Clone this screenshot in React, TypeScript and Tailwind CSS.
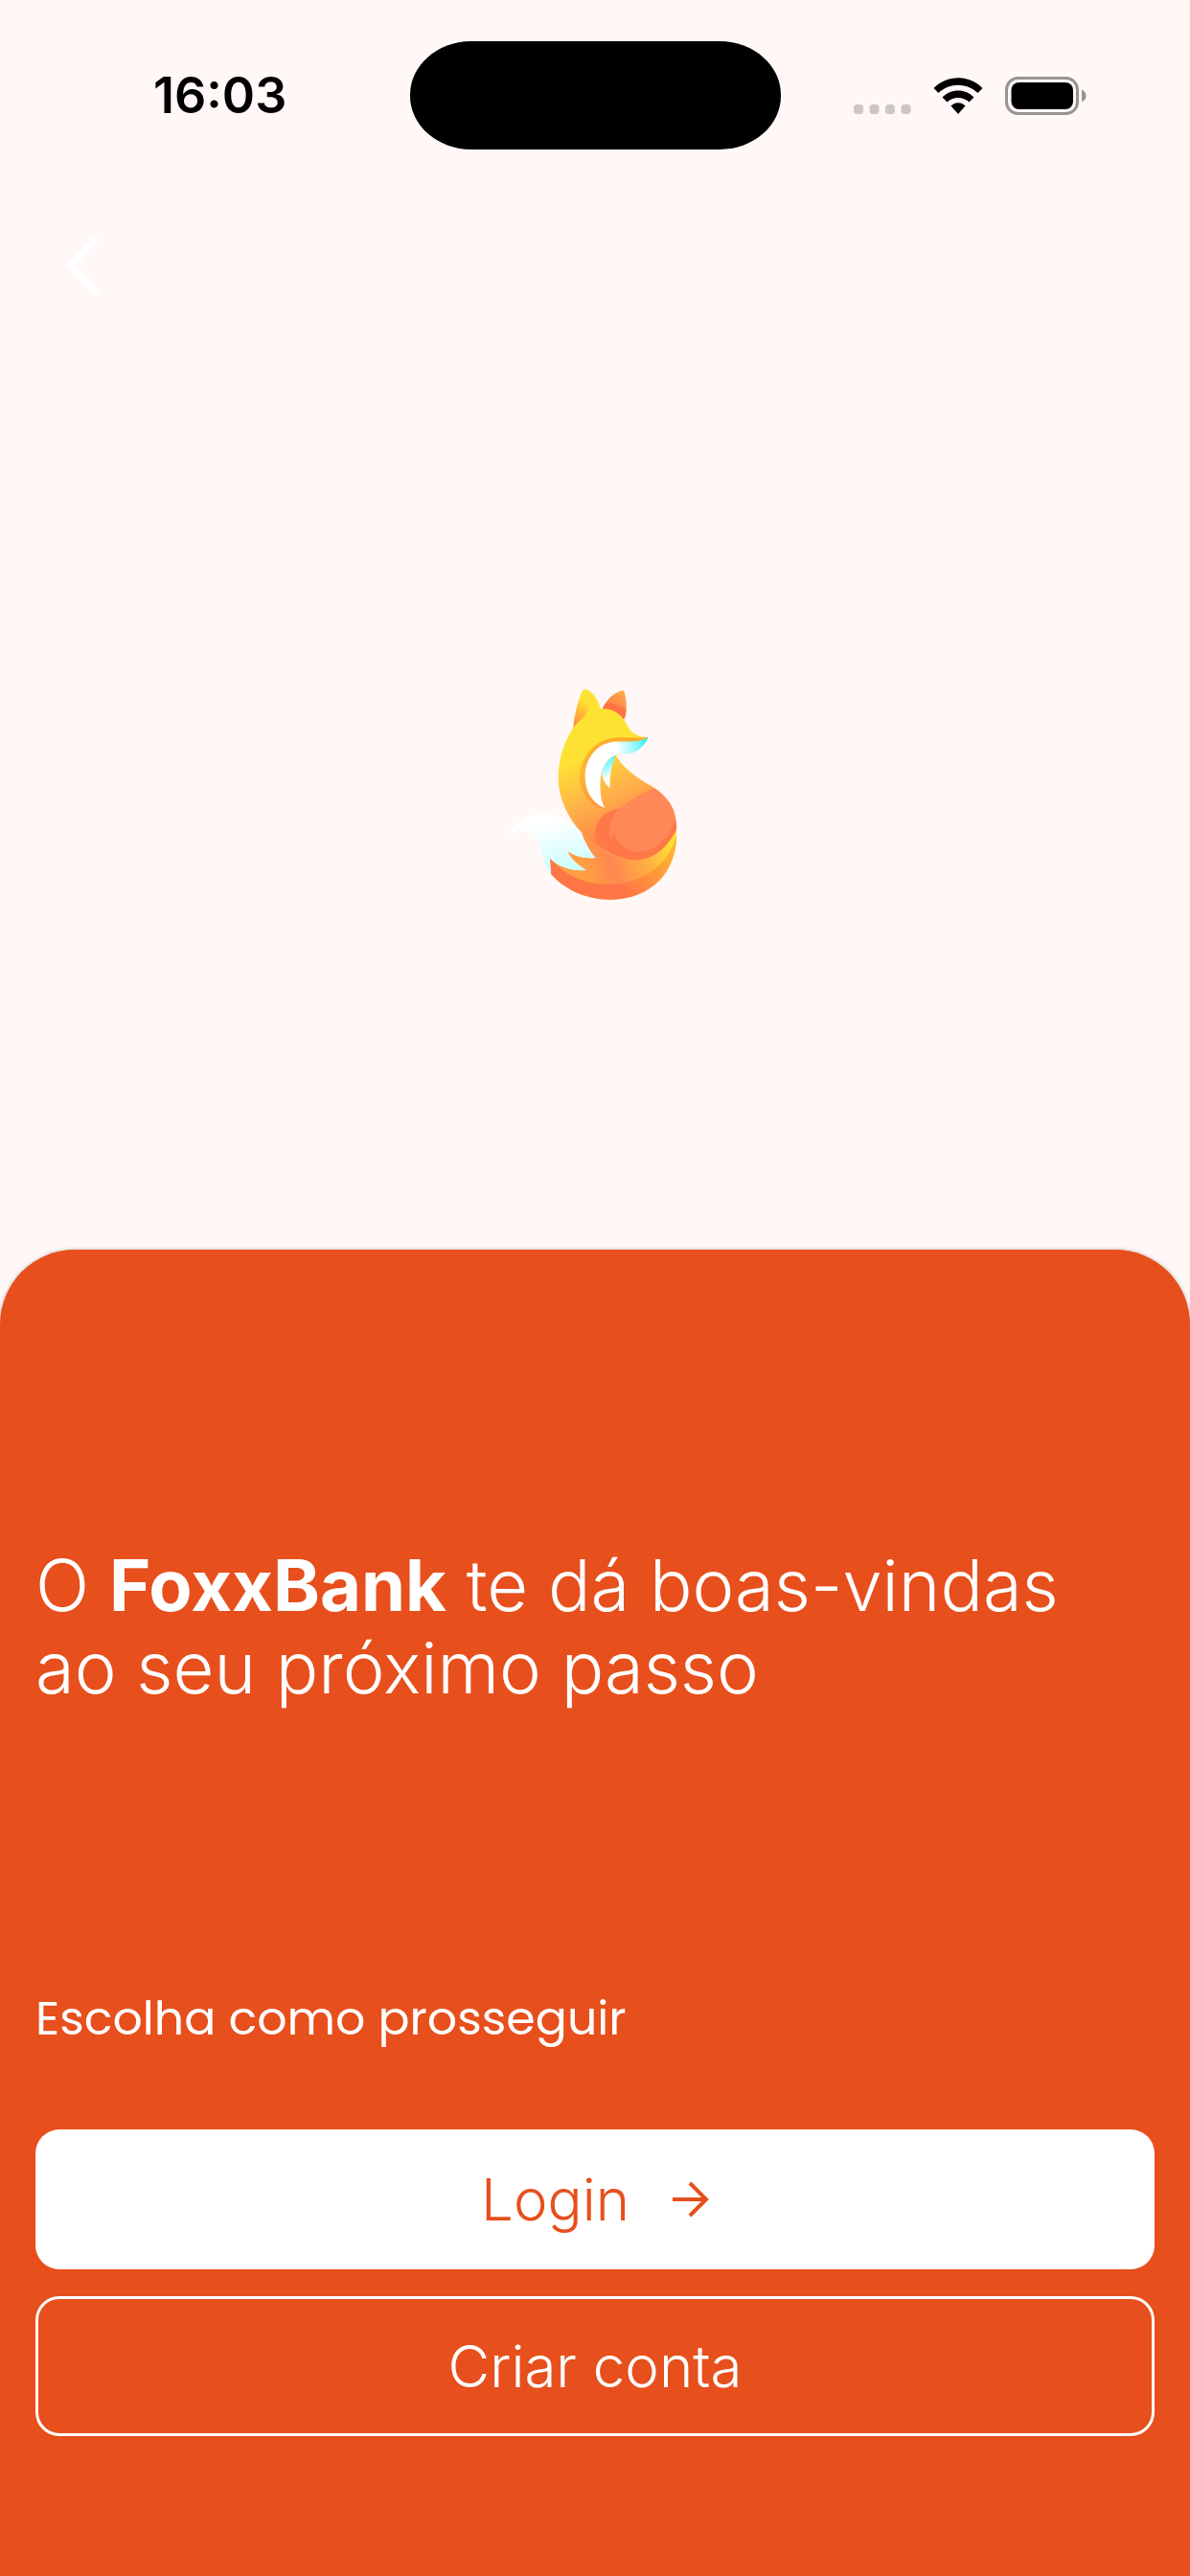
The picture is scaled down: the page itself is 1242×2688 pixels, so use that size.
function FoxLogo() {
  return (
    <svg viewBox="3 0 720 810" className="h-[270px] w-[240px]" role="img" aria-label="FoxxBank">
      <defs>
        <linearGradient id="body" gradientUnits="userSpaceOnUse" x1="310" y1="300" x2="430" y2="560">
          <stop offset="0" stopColor="#fee233" />
          <stop offset="0.5" stopColor="#ffb149" />
          <stop offset="1" stopColor="#ff7e46" />
        </linearGradient>
        <linearGradient id="earRight" gradientUnits="userSpaceOnUse" x1="450" y1="90" x2="415" y2="150">
          <stop offset="0" stopColor="#ffad48" />
          <stop offset="1" stopColor="#ff7a48" />
        </linearGradient>
        <linearGradient id="earLeft" gradientUnits="userSpaceOnUse" x1="296" y1="200" x2="338" y2="125">
          <stop offset="0" stopColor="#ff8743" />
          <stop offset="1" stopColor="#fee233" />
        </linearGradient>
        <linearGradient id="tail" gradientUnits="userSpaceOnUse" x1="325" y1="640" x2="600" y2="550">
          <stop offset="0" stopColor="#ff9f42" />
          <stop offset="0.3" stopColor="#ff8850" />
          <stop offset="0.7" stopColor="#ffb240" />
          <stop offset="1" stopColor="#fee233" />
        </linearGradient>
        <linearGradient id="tailLow" gradientUnits="userSpaceOnUse" x1="450" y1="710" x2="600" y2="590">
          <stop offset="0" stopColor="#ff7646" />
          <stop offset="1" stopColor="#ffb233" />
        </linearGradient>
        <linearGradient id="tip" gradientUnits="userSpaceOnUse" x1="220" y1="500" x2="250" y2="665">
          <stop offset="0" stopColor="#ffffff" />
          <stop offset="1" stopColor="#c8fdff" />
        </linearGradient>
        <linearGradient id="muzzle" gradientUnits="userSpaceOnUse" x1="430" y1="260" x2="528" y2="245">
          <stop offset="0" stopColor="#ffffff" />
          <stop offset="0.75" stopColor="#6ff5fb" />
          <stop offset="1" stopColor="#10e6f2" />
        </linearGradient>
        <linearGradient id="shade" gradientUnits="userSpaceOnUse" x1="400" y1="235" x2="370" y2="458">
          <stop offset="0" stopColor="#ffab25" />
          <stop offset="0.5" stopColor="#ffb533" />
          <stop offset="1" stopColor="#ff963f" />
        </linearGradient>
        <linearGradient id="chest" gradientUnits="userSpaceOnUse" x1="390" y1="315" x2="412" y2="360">
          <stop offset="0" stopColor="#6ff5fb" />
          <stop offset="1" stopColor="#ffffff" />
        </linearGradient>
      </defs>
      <path fill="url(#earRight)" d="M386 146C400 115 425 92 453 88C462 115 464 145 455 178L430 175Z" />
      <path fill="#ff7347" d="M386 146L396 129C422 127 446 136 461 148C460 160 458 170 455 178L430 175Z" />
      <path
        fill="url(#body)"
        d="M295 205C300 160 310 115 328 84C357 88 372 115 380 146C420 143 450 165 465 200C480 225 500 236 530 234C515 265 490 285 455 284L428 292C448 328 490 360 540 388C588 418 620 470 618 524C590 580 548 620 488 620C435 620 370 580 325 538C278 488 248 425 248 362C248 300 268 248 295 205Z"
      />
      <path
        fill="url(#tail)"
        d="M320 533C380 585 430 618 490 618C545 616 590 570 618 524C624 650 540 743 410 743C330 743 260 705 225 662L221 613C250 640 290 655 335 650C310 635 285 615 277 590C300 608 330 614 362 613C345 590 330 560 320 533Z"
      />
      <path
        fill="url(#tailLow)"
        d="M221 613C265 667 335 696 410 696C510 692 592 640 618 540C620 655 540 743 410 743C330 743 260 705 225 662Z"
      />
      <path
        fill="url(#tip)"
        d="M88 540C115 505 150 473 200 473C250 473 285 498 320 533C330 560 345 590 366 613C330 614 300 608 277 590C285 615 310 635 335 651C290 656 246 641 222 613L225 662C203 635 198 600 190 572C180 530 130 518 88 540Z"
      />
      <path fill="url(#earLeft)" d="M295 205C300 160 310 115 328 84C346 98 350 142 333 166C322 181 308 187 295 205Z" />
      <path
        fill="url(#shade)"
        d="M530 234C500 241 460 234 428 236C366 240 316 293 316 362C318 415 350 450 395 458L405 394L420 280L500 252Z"
      />
      <path fill="url(#body)" d="M428 292L440 325L450 400L395 458C383 430 378 400 384 350Z" />
      <path
        fill="#ff7848"
        d="M440 458C383 465 353 510 368 568C400 590 440 619 488 619C548 619 590 580 618 524C620 505 616 490 612 478L500 440Z"
      />
      <path
        fill="#ff8858"
        d="M440 458C470 433 520 405 548 393C590 420 614 458 615 492C598 540 560 595 497 594C455 590 430 562 423 532Q415 540 412 555C402 520 415 480 440 458Z"
      />
      <path
        fill="url(#muzzle)"
        d="M530 234C515 267 490 289 455 287Q440 285 427 291C400 303 387 325 381 360C377 400 382 435 394 457C350 437 330 400 332 350C336 290 380 248 430 248C470 247 500 253 530 234Z"
      />
      <path fill="url(#chest)" d="M428 291C405 300 384 325 385 353C390 372 398 386 410 394C408 355 416 320 428 291Z" />
    </svg>
  );
}

function StatusBar() {
  return (
    <header className="grid h-[113px] grid-cols-[1fr_387px_1fr] items-center">
      <time className="pl-40 text-[52px] leading-none font-semibold text-black">16:03</time>
      <div className="h-full rounded-[64px/56px] bg-black" />
      <div className="flex items-center justify-end gap-[23px] pr-[108px]">
        <svg viewBox="0 0 60 40" className="h-10 w-[60px]" fill="#cdc6c4" aria-hidden="true">
          <rect x="0" y="29" width="10" height="10" rx="3.5" />
          <rect x="16.5" y="29" width="10" height="10" rx="3.5" />
          <rect x="33" y="29" width="10" height="10" rx="3.5" />
          <rect x="49.5" y="29" width="10" height="10" rx="3.5" />
        </svg>
        <svg viewBox="0 0 52 40" className="h-10 w-[52px]" fill="#000" aria-hidden="true">
          <path d="M0.5 12C14.500-2.500 37.500-2.500 51.500 12L46.500 17C35 6 17 6 5.500 17Z" />
          <path d="M9.500 21.500C18.500 12 33.500 12 42.500 21.500L37.500 26.500C31 20.500 21 20.500 14.500 26.500Z" />
          <path d="M18.500 30.500C22.500 26 29.500 26 33.500 30.500L26 39Z" />
        </svg>
        <svg viewBox="0 0 85 40" className="h-10 w-[85px]" aria-hidden="true">
          <rect x="1.500" y="1.500" width="74" height="37" rx="12" fill="none" stroke="#989392" strokeWidth="3" />
          <rect x="6.500" y="6" width="64.500" height="28" rx="8" fill="#000" />
          <path d="M80 13.500Q84.500 16 84.500 20T80 26.500Z" fill="#989392" />
        </svg>
      </div>
    </header>
  );
}

export default function App() {
  return (
    <div className="flex min-h-screen flex-col bg-[#fff8f6] pt-[43px] font-[Inter,'Liberation_Sans',sans-serif]">
      <StatusBar />
      <nav className="mt-[51px] flex h-[140px] items-center px-4">
        <button type="button" aria-label="Voltar" className="flex size-[140px] items-center justify-center">
          <svg viewBox="0 0 34 60" className="h-[60px] w-[34px]" fill="none" stroke="#fff" strokeWidth="7" strokeLinecap="round" strokeLinejoin="round">
            <path d="M30 4L4.500 30L30 56" />
          </svg>
        </button>
      </nav>
      <main className="flex flex-1 flex-col">
        <div className="flex flex-1 items-center justify-center">
          <FoxLogo />
        </div>
        <section className="flex flex-col rounded-t-[78px] bg-[#e74f1c] px-[37px] pt-[307px] pb-[146px] text-white shadow-[0_0_4px_rgba(0,0,0,0.25)]">
          <h1 className="text-[74px] leading-[86px] font-light">
            O <strong className="font-bold">FoxxBank</strong> te dá boas-vindas
            <br />
            ao seu próximo passo
          </h1>
          <p className="mt-[287px] font-[Poppins,Inter,sans-serif] text-[49px] leading-[72px]">Escolha como prosseguir</p>
          <div className="mt-[80px] flex flex-col gap-7">
            <button type="button" className="flex h-[146px] items-center justify-center gap-[45px] rounded-[25px] bg-white text-[60px] font-light text-[#e74f1c]">
              Login
              <svg viewBox="0 0 38 38" className="size-[38px]" fill="none" stroke="currentColor" strokeWidth="4" aria-hidden="true">
                <path d="M0 19H35M18 2L35 19L18 36" />
              </svg>
            </button>
            <button type="button" className="h-[146px] rounded-[25px] border-3 border-white text-[60px] font-light">
              Criar conta
            </button>
          </div>
        </section>
      </main>
    </div>
  );
}
